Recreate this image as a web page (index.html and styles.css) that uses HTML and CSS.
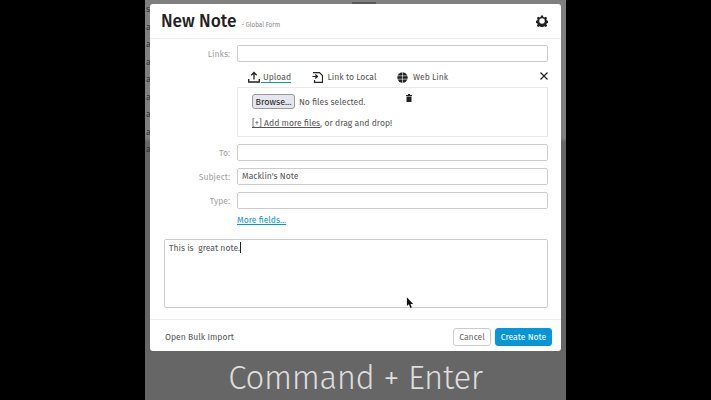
FILE: index.html
```html
<!DOCTYPE html>
<html lang="en">
<head>
  <meta charset="UTF-8" />
  <meta name="viewport" content="width=device-width, initial-scale=1.0" />
  <title>New Note</title>
  <link rel="stylesheet" href="styles.css">
</head>
<body>
  <div class="stage">
    <div class="page-behind">s<br>a<br>a<br>a<br>a<br>a<br>a<br>a<br>a</div>
    <div class="page-top"></div>
    <div class="modal">
      <header class="modal-head">
        <h1>New Note</h1>
        <span class="form-name">- Global Form</span>
        <svg class="gear" width="12" height="12" viewBox="0 0 24 24"><path fill-rule="evenodd" d="M10 1h4l.6 3 2.400 1 2.600-1.700 2.800 2.800-1.700 2.600 1 2.400 3 .6v4l-3 .6-1 2.400 1.700 2.600-2.800 2.800-2.600-1.700-2.400 1-.6 3h-4l-.6-3-2.400-1-2.600 1.700-2.800-2.800 1.700-2.600-1-2.400-3-.6v-4l3-.6 1-2.400-1.700-2.600 2.800-2.800 2.600 1.700 2.400-1zM12 6.500a5.500 5.500 0 1 0 0 11 5.500 5.500 0 0 0 0-11z"/></svg>
      </header>

      <div class="fields">
        <div class="row row-links">
          <label>Links:</label>
          <div class="input"></div>
        </div>

        <div class="upload">
          <nav class="tabs">
            <a class="tab tab-on">
              <svg width="12" height="12" viewBox="0 0 12 12"><path d="M6 8.500V1.500M3.300 4.200L6 1.500l2.700 2.700M.7 8v3h10.600V8" fill="none" stroke="#222" stroke-width="1.300"/></svg>
              <span>Upload</span>
            </a>
            <a class="tab">
              <svg width="11" height="11" viewBox="0 0 11 11"><path d="M1 .7h6.500l3 3v6.600H2.500V8M.5 4.500h4.500M3.300 2.500L5.500 4.500 3.300 6.500" fill="none" stroke="#222" stroke-width="1.200"/></svg>
              <span>Link to Local</span>
            </a>
            <a class="tab">
              <svg width="11" height="11" viewBox="0 0 11 11"><circle cx="5.500" cy="5.500" r="5.200" fill="#222"/><path d="M0 3.800h11M0 7.200h11M5.500 0v11" stroke="#fff" stroke-width=".6"/></svg>
              <span>Web Link</span>
            </a>
            <svg class="close" width="8" height="8" viewBox="0 0 8 8"><path d="M.5.500l7 7M7.500.500l-7 7" stroke="#222" stroke-width="1.200"/></svg>
          </nav>
          <div class="drop">
            <div class="file-line">
              <button class="browse">Browse...</button>
              <span>No files selected.</span>
              <svg class="trash" width="6" height="8" viewBox="0 0 6 8"><path d="M2 0h2v1h2v1H0V1h2zM.5 2.500h5V8h-5z" fill="#222"/></svg>
            </div>
            <div class="add-line"><a>[+] Add more files</a>, or drag and drop!</div>
          </div>
        </div>

        <div class="row">
          <label>To:</label>
          <div class="input"></div>
        </div>
        <div class="row">
          <label>Subject:</label>
          <div class="input">Macklin's Note</div>
        </div>
        <div class="row row-last">
          <label>Type:</label>
          <div class="input"></div>
        </div>
        <a class="more">More fields...</a>
      </div>

      <div class="body-text">This is &nbsp;great note.<i class="caret"></i></div>

      <footer class="modal-foot">
        <a class="bulk">Open Bulk Import</a>
        <div class="actions">
          <button class="btn btn-cancel">Cancel</button>
          <button class="btn btn-blue">Create Note</button>
        </div>
      </footer>

      <svg class="pointer" width="8" height="12" viewBox="0 0 9 13"><path d="M1 0v10l2.300-2 1.500 4 1.700-.7-1.500-3.800H8z" fill="#111"/></svg>
    </div>
    <div class="caption">Command + Enter</div>
  </div>
</body>
</html>
```
FILE: styles.css
```css
* {
  box-sizing: border-box;
}

body {
  margin: 0;
  height: 400px;
  overflow: hidden;
  background-color: #000;
  font-family: 'Fira Sans', 'Open Sans', 'Noto Sans', sans-serif;
  font-size: 8.6px;
  color: #555;
}

.stage {
  position: relative;
  width: 421px;
  height: 400px;
  margin-left: 145px;
  padding-top: 4px;
  background: linear-gradient(#808080 0, #808080 138px, #666 142px, #666 100%);
}

/* the app page showing behind the dialog */
.page-behind {
  position: absolute;
  left: 1px;
  top: 1px;
  font-size: 9px;
  line-height: 17.500px;
  color: #333;
}

.page-top {
  position: absolute;
  left: 207px;
  top: 2px;
  width: 24px;
  height: 2px;
  background-color: #5a5a5a;
}

.modal {
  position: relative;
  width: 411px;
  height: 347px;
  margin-left: 5px;
  background-color: #fff;
  border-radius: 3px;
}

.modal-head {
  display: flex;
  align-items: baseline;
  height: 35px;
  padding: 7px 13px 0 11px;
  border-bottom: 1px solid #eee;
}

.modal-head h1 {
  margin: 0;
  font-size: 17.300px;
  font-weight: 500;
  color: #222;
}

.form-name {
  margin-left: 5px;
  font-size: 6.300px;
  color: #888;
}

.gear {
  margin-left: auto;
  margin-top: 4px;
  align-self: flex-start;
  fill: #222;
}

.fields {
  padding: 6px 13px 0 0;
}

.row {
  display: flex;
  align-items: center;
  margin-bottom: 7px;
}

.row-links {
  margin-bottom: 5px;
}

.row-last {
  margin-bottom: 6px;
}

.row label {
  width: 87px;
  padding-right: 7px;
  text-align: right;
  color: #a0a0a0;
}

.input {
  flex-grow: 1;
  height: 17px;
  padding-left: 4px;
  line-height: 15px;
  border: 1px solid #ccc;
  border-radius: 2px;
}

.upload {
  margin-left: 87px;
}

.tabs {
  display: flex;
  align-items: center;
  height: 20px;
  padding-left: 11px;
}

.tab {
  display: flex;
  align-items: center;
  gap: 5px;
  margin-right: 20.500px;
}

.tab-on {
  gap: 1px;
}

.tab-on span {
  padding-left: 2px;
  border-bottom: 1px solid #0696d7;
}

.close {
  margin-left: auto;
  margin-top: -2px;
}

.drop {
  height: 50px;
  margin-bottom: 7px;
  padding: 6px 14px;
  border: 1px solid #e8e8e8;
}

.file-line {
  display: flex;
  align-items: center;
  gap: 4px;
}

.browse {
  width: 43px;
  height: 15px;
  padding: 0;
  font: inherit;
  font-size: 9px;
  color: #222;
  background-color: #e6e6ee;
  border: 1px solid #999;
  border-radius: 3px;
}

.trash {
  margin-left: 37px;
  margin-top: -7px;
}

.add-line {
  margin-top: 9px;
}

.add-line a {
  text-decoration: underline;
}

.more {
  display: block;
  margin-left: 87px;
  color: #0696d7;
  text-decoration: underline;
}

.body-text {
  height: 69px;
  margin: 14px 13px 0 14px;
  padding: 2px 4px;
  border: 1px solid #ccc;
  border-radius: 2px;
}

.caret {
  display: inline-block;
  width: 1px;
  height: 11px;
  vertical-align: -2px;
  background-color: #222;
}

.modal-foot {
  display: flex;
  align-items: center;
  justify-content: space-between;
  height: 32px;
  margin-top: 11px;
  padding: 2px 9px 0 15px;
  border-top: 1px solid #eee;
}

.actions {
  display: flex;
  gap: 4px;
}

.btn {
  height: 18px;
  padding: 0;
  font: inherit;
  color: #666;
  background-color: #fff;
  border: 1px solid #ccc;
  border-radius: 3px;
}

.btn-cancel {
  width: 38px;
}

.btn-blue {
  width: 57px;
  color: #fff;
  background-color: #0696d7;
  border-color: #0696d7;
}

.pointer {
  position: absolute;
  left: 256px;
  top: 293px;
}

.caption {
  margin-top: 7px;
  text-align: center;
  font-size: 33px;
  font-weight: 300;
  letter-spacing: -0.400px;
  color: #ddd;
}
```
